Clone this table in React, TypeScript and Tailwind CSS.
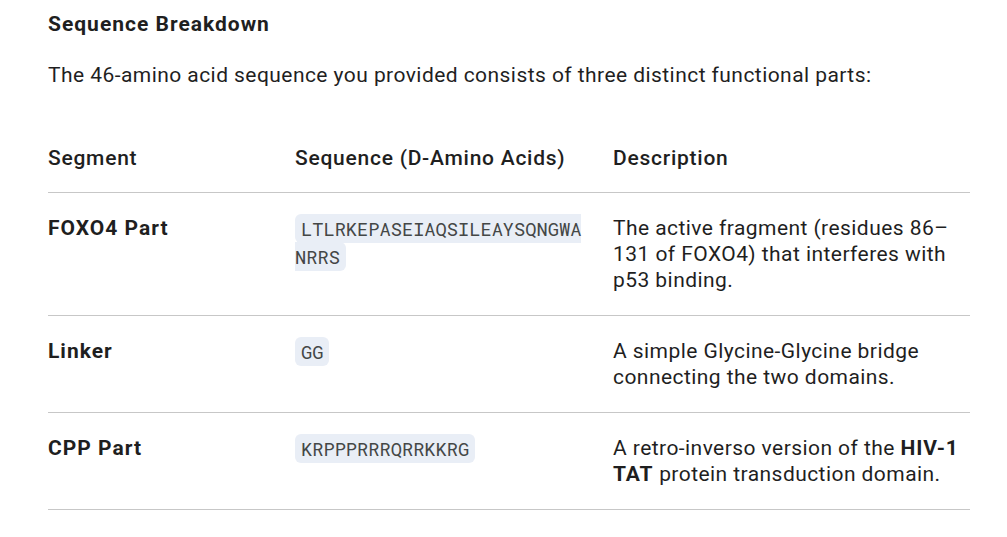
const rows = [
  {
    segment: "FOXO4 Part",
    seq: "LTLRKEPASEIAQSILEAYSQNGWANRRS",
    desc: (
      <>
        The active fragment (residues 86–
        <br />
        131 of FOXO4) that interferes with p53 binding.
      </>
    ),
  },
  {
    segment: "Linker",
    seq: "GG",
    desc: <>A simple Glycine-Glycine bridge connecting the two domains.</>,
  },
  {
    segment: "CPP Part",
    seq: "KRPPPRRRQRRKKRG",
    desc: (
      <>
        A retro-inverso version of the <b className="font-bold tracking-[0.9px]">HIV-1 TAT</b> protein
        transduction domain.
      </>
    ),
  },
];

export default function App() {
  return (
    <div
      className="min-h-screen bg-white text-[#1f1f1f] pl-12 pr-[37px] pt-[11px]"
      style={{ fontFamily: "Roboto, 'Noto Sans', sans-serif" }}
    >
      <h2 className="text-[21px] leading-[26px] font-bold tracking-[1px]">Sequence Breakdown</h2>
      <p className="mt-[25px] text-[21px] leading-[26px] tracking-[0.44px]">
        The 46-amino acid sequence you provided consists of three distinct functional parts:
      </p>

      <table className="mt-[44px] w-[922px] border-collapse text-left table-fixed">
        <colgroup>
          <col className="w-[247px]" />
          <col className="w-[318px]" />
          <col />
        </colgroup>
        <thead>
          <tr className="border-b border-[#c7c7c7]">
            <th className="pt-[13px] pb-[21px] pr-7 text-[21px] leading-[26px] font-medium tracking-[0.75px]">
              Segment
            </th>
            <th className="pt-[13px] pb-[21px] pr-7 text-[21px] leading-[26px] font-medium tracking-[0.75px]">
              Sequence (D-Amino Acids)
            </th>
            <th className="pt-[13px] pb-[21px] pr-1 text-[21px] leading-[26px] font-medium tracking-[0.75px]">
              Description
            </th>
          </tr>
        </thead>
        <tbody>
          {rows.map((r) => (
            <tr key={r.segment} className="border-b border-[#c7c7c7] align-top">
              <td className="pt-[22px] pb-[22px] pr-7 text-[21px] leading-[26px] font-bold tracking-[1px]">
                {r.segment}
              </td>
              <td className="pt-[23px] pb-[22px] pr-7 leading-[26px]">
                <code
                  className="bg-[#e9eef6] text-[#444746] rounded-md px-1.5 py-[2px] text-[18.7px] break-all [box-decoration-break:slice]"
                  style={{ fontFamily: "'Roboto Mono', 'Liberation Mono', monospace" }}
                >
                  {r.seq}
                </code>
              </td>
              <td className="pt-[22px] pb-[22px] pr-1 text-[21px] leading-[26px] tracking-[0.44px]">{r.desc}</td>
            </tr>
          ))}
        </tbody>
      </table>
    </div>
  );
}
